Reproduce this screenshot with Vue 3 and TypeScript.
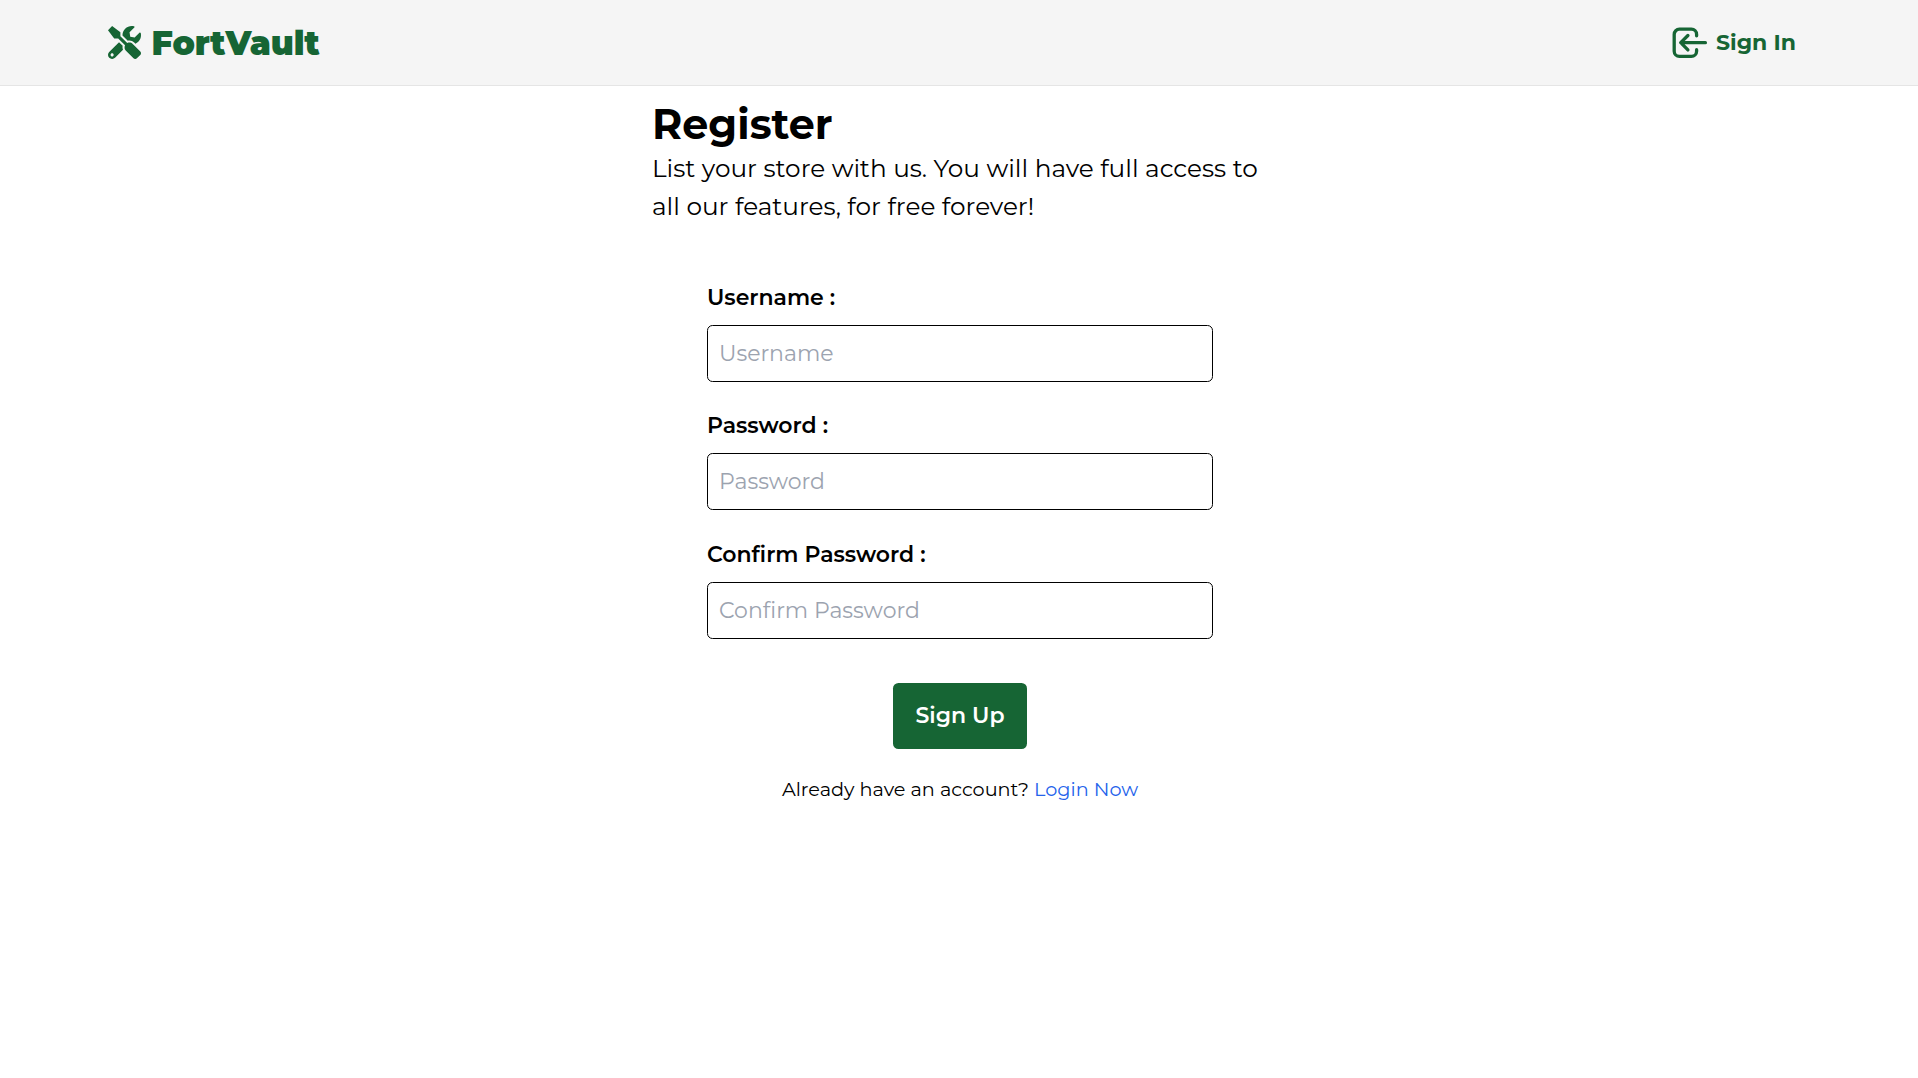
<script setup lang="ts">
import { reactive } from 'vue'

interface Field {
  id: string
  label: string
  placeholder: string
  type: string
}

const fields: Field[] = [
  { id: 'username', label: 'Username :', placeholder: 'Username', type: 'text' },
  { id: 'password', label: 'Password :', placeholder: 'Password', type: 'password' },
  { id: 'confirm', label: 'Confirm Password :', placeholder: 'Confirm Password', type: 'password' },
]

const form = reactive<Record<string, string>>({ username: '', password: '', confirm: '' })
</script>

<template>
  <div class="page">
    <header class="navbar">
      <a class="brand">
        <svg class="brand-icon" viewBox="0 0 512 512" fill="currentColor" aria-hidden="true">
          <path d="M501.1 395.7L384 278.6c-23.1-23.1-57.6-27.6-85.4-13.9L192 158.1V96L64 0 0 64l96 128h62.1l106.6 106.6c-13.6 27.8-9.2 62.3 13.9 85.4l117.1 117.1c14.6 14.6 38.2 14.6 52.7 0l52.7-52.7c14.5-14.6 14.5-38.2 0-52.7zM331.7 225c28.3 0 54.9 11 74.9 31l19.4 19.4c15.8-6.9 30.8-16.5 43.8-29.5 37.1-37.1 49.7-89.3 37.9-136.7-2.2-9-13.5-12.1-20.1-5.5l-74.4 74.4-67.9-11.3L334 98.9l74.4-74.4c6.6-6.6 3.4-17.9-5.7-20.2-47.4-11.7-99.6.9-136.6 37.9-28.5 28.5-41.9 66.1-41.2 103.6l82.1 82.1c8.1-1.9 16.5-2.9 24.7-2.9zm-103.9 82l-56.7-56.7L18.7 402.8c-25 25-25 65.5 0 90.5s65.5 25 90.5 0l123.6-123.6c-7.6-19.9-9.9-41.6-5-62.7zM64 472c-13.2 0-24-10.8-24-24 0-13.3 10.7-24 24-24s24 10.7 24 24c0 13.2-10.7 24-24 24z" />
        </svg>
        <span class="brand-name">FortVault</span>
      </a>
      <a class="signin">
        <svg class="signin-icon" viewBox="0 0 36 32" fill="none" stroke="currentColor" stroke-width="3.3" stroke-linecap="round" stroke-linejoin="round" aria-hidden="true">
          <path d="M24.6 8.8v-1.4a5.2 5.2 0 0 0-5.2-5.2H7.4a5.2 5.2 0 0 0-5.2 5.2v16.8a5.2 5.2 0 0 0 5.2 5.2h12a5.2 5.2 0 0 0 5.2-5.2v-1.5" />
          <path d="M33.4 15.7H9M15.9 8.5l-7.2 7.2 7.2 7.2" />
        </svg>
        <span class="signin-text">Sign In</span>
      </a>
    </header>

    <main class="content">
      <h1>Register</h1>
      <p class="lead">List your store with us. You will have full access to<br />all our features, for free forever!</p>

      <form class="form" @submit.prevent>
        <div v-for="f in fields" :key="f.id" class="field">
          <label :for="f.id">{{ f.label }}</label>
          <input :id="f.id" v-model="form[f.id]" :type="f.type" :placeholder="f.placeholder" />
        </div>
        <button type="submit">Sign Up</button>
        <p class="login">Already have an account? <a>Login Now</a></p>
      </form>
    </main>
  </div>
</template>

<style>
body {
  background: #fff;
}
</style>

<style scoped>
.page {
  min-height: 1078px;
  font-family: Montserrat, Inter, sans-serif;
  font-size: 22px;
  color: #000;
}
.navbar {
  box-sizing: border-box;
  height: 86px;
  padding: 0 122px 0 108px;
  display: flex;
  align-items: center;
  justify-content: space-between;
  background: #f5f5f5;
  border-bottom: 1px solid #e5e5e5;
  color: #166534;
}
.brand,
.signin {
  display: flex;
  align-items: center;
}
.brand-icon {
  width: 33px;
  height: 33px;
}
.brand-name {
  margin-left: 10.5px;
  padding-top: 1px;
  font-size: 33px;
  font-weight: 900;
  line-height: 40px;
}
.signin-icon {
  width: 36px;
  height: 32px;
}
.signin-text {
  width: 80px;
  margin-left: 8px;
  font-weight: 700;
  line-height: 30px;
  white-space: nowrap;
}
.content {
  width: 614px;
  margin: 0 auto;
  padding-top: 13px;
}
h1 {
  margin: 0;
  font-size: 41.25px;
  font-weight: 700;
  line-height: 50px;
}
.lead {
  margin: 0;
  font-size: 24.75px;
  line-height: 38px;
  white-space: nowrap;
}
.form {
  width: 506px;
  margin: 59px 53px 0 55px;
  display: flex;
  flex-direction: column;
}
.field {
  display: flex;
  flex-direction: column;
  margin-bottom: 29.4px;
}
label {
  margin-bottom: 13px;
  font-weight: 600;
  line-height: 28px;
}
input {
  box-sizing: border-box;
  width: 100%;
  height: 57px;
  padding: 0 11px;
  border: 1px solid #000;
  border-radius: 5.5px;
  background: #fff;
  font-family: inherit;
  font-size: 22px;
}
.field {
  margin-bottom: 30.4px;
}
input::placeholder {
  color: #9ca3af;
  opacity: 1;
}
button {
  align-self: center;
  width: 134px;
  height: 66px;
  margin-top: 13.6px;
  padding: 0 0 1px;
  border: 0;
  border-radius: 5.5px;
  background: #166534;
  color: #fff;
  font-family: inherit;
  font-size: 22px;
  font-weight: 600;
}
.login {
  margin: 26px 0 0;
  font-size: 19.25px;
  line-height: 28px;
  text-align: center;
}
.login a {
  color: #2563eb;
}
</style>
